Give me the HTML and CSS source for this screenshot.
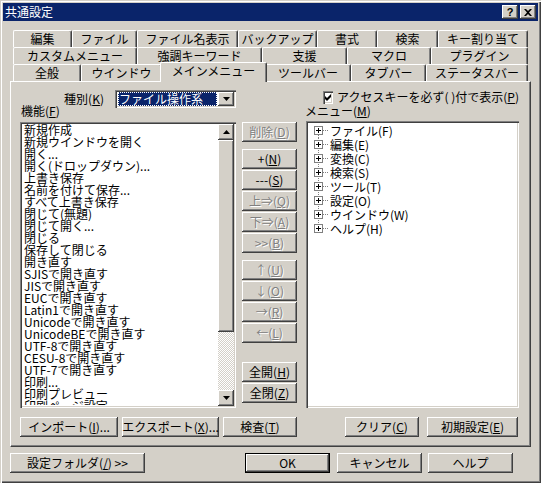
FILE: index.html
```html
<!DOCTYPE html>
<html lang="ja">
<head>
<meta charset="utf-8">
<title>共通設定</title>
<link rel="stylesheet" href="styles.css">
</head>
<body>
<div class="window">
  <div class="titlebar">
    <span class="title">共通設定</span>
    <div class="tb-buttons">
      <span class="tb-btn q">?</span>
      <span class="tb-btn"><svg width="8" height="7" viewBox="0 0 8 7"><path d="M0 0h2l2 2 2-2h2L5 3.5 8 7H6L4 5 2 7H0l3-3.5z" fill="#000"/></svg></span>
    </div>
  </div>
  <div class="client">
    <div class="tabs">
      <div class="tab-row">
        <div class="tab" style="width:59px">編集</div>
        <div class="tab" style="width:65px">ファイル</div>
        <div class="tab" style="width:101px">ファイル名表示</div>
        <div class="tab" style="width:79px">バックアップ</div>
        <div class="tab" style="width:60px">書式</div>
        <div class="tab" style="width:61px">検索</div>
        <div class="tab" style="width:90px">キー割り当て</div>
      </div>
      <div class="tab-row">
        <div class="tab" style="width:124px">カスタムメニュー</div>
        <div class="tab" style="width:125px">強調キーワード</div>
        <div class="tab" style="width:85px">支援</div>
        <div class="tab" style="width:84px">マクロ</div>
        <div class="tab" style="width:97px">プラグイン</div>
      </div>
      <div class="tab-row">
        <div class="tab" style="width:68px">全般</div>
        <div class="tab" style="width:81px">ウインドウ</div>
        <div class="tab sel" style="width:107px">メインメニュー</div>
        <div class="tab" style="width:86px">ツールバー</div>
        <div class="tab" style="width:75px">タブバー</div>
        <div class="tab" style="width:102px">ステータスバー</div>
      </div>
    </div>
    <div class="panel">
      <div class="panel-head">
        <div class="head-left">
          <div class="kind-row">
            <span class="lbl">種別(<u>K</u>)</span>
            <div class="combo">
              <div class="combo-val"><span>ファイル操作系</span></div>
              <div class="combo-btn"><svg width="7" height="4" viewBox="0 0 7 4"><polygon points="0,0 7,0 3.5,4" fill="#000"/></svg></div>
            </div>
          </div>
          <div class="lbl func-lbl">機能(<u>F</u>)</div>
        </div>
        <div class="head-right">
          <div class="check-row">
            <span class="checkbox"><svg width="9" height="9" viewBox="0 0 9 9"><polygon points="1,3 3,5 7,1 7,4 3,8 1,6" fill="#000"/></svg></span>
            <span class="lbl">アクセスキーを必ず( )付で表示(<u>P</u>)</span>
          </div>
          <div class="lbl menu-lbl">メニュー(<u>M</u>)</div>
        </div>
      </div>
      <div class="panel-body">
        <div class="listbox">
          <div class="list-items">
            <div>新規作成</div>
            <div>新規ウインドウを開く</div>
            <div>開く...</div>
            <div>開く(ドロップダウン)...</div>
            <div>上書き保存</div>
            <div>名前を付けて保存...</div>
            <div>すべて上書き保存</div>
            <div>閉じて(無題)</div>
            <div>閉じて開く...</div>
            <div>閉じる</div>
            <div>保存して閉じる</div>
            <div>開き直す</div>
            <div>SJISで開き直す</div>
            <div>JISで開き直す</div>
            <div>EUCで開き直す</div>
            <div>Latin1で開き直す</div>
            <div>Unicodeで開き直す</div>
            <div>UnicodeBEで開き直す</div>
            <div>UTF-8で開き直す</div>
            <div>CESU-8で開き直す</div>
            <div>UTF-7で開き直す</div>
            <div>印刷...</div>
            <div>印刷プレビュー</div>
            <div>印刷ページ設定</div>
          </div>
          <div class="vscroll">
            <div class="sb-btn"><svg width="7" height="4" viewBox="0 0 7 4"><polygon points="3.5,0 7,4 0,4" fill="#000"/></svg></div>
            <div class="sb-thumb"></div>
            <div class="sb-track"></div>
            <div class="sb-btn"><svg width="7" height="4" viewBox="0 0 7 4"><polygon points="0,0 7,0 3.5,4" fill="#000"/></svg></div>
          </div>
        </div>
        <div class="btn-col">
          <div class="btn dis">削除(<u>D</u>)</div>
          <div class="group g1">
            <div class="btn">+(<u>N</u>)</div>
            <div class="btn">---(<u>S</u>)</div>
            <div class="btn dis">上⇒(<u>Q</u>)</div>
            <div class="btn dis">下⇒(<u>A</u>)</div>
            <div class="btn dis">&gt;&gt;(<u>B</u>)</div>
          </div>
          <div class="group g2">
            <div class="btn dis">↑(<u>U</u>)</div>
            <div class="btn dis">↓(<u>O</u>)</div>
            <div class="btn dis">→(<u>R</u>)</div>
            <div class="btn dis">←(<u>L</u>)</div>
          </div>
          <div class="group g3">
            <div class="btn">全開(<u>H</u>)</div>
            <div class="btn">全閉(<u>Z</u>)</div>
          </div>
        </div>
        <div class="tree">
          <div class="node"><svg class="exp" width="16" height="14" viewBox="0 0 16 14"><line x1="4.5" y1="7" x2="4.5" y2="14" stroke="#808080" stroke-dasharray="1 1"/><rect x="0.5" y="2.5" width="8" height="8" fill="#fff" stroke="#808080"/><path d="M2 6.5h5M4.5 4v5" stroke="#000"/><line x1="9" y1="6.5" x2="14" y2="6.5" stroke="#808080" stroke-dasharray="1 1"/></svg><span>ファイル(F)</span></div>
          <div class="node"><svg class="exp" width="16" height="14" viewBox="0 0 16 14"><line x1="4.5" y1="0" x2="4.5" y2="14" stroke="#808080" stroke-dasharray="1 1"/><rect x="0.5" y="2.5" width="8" height="8" fill="#fff" stroke="#808080"/><path d="M2 6.5h5M4.5 4v5" stroke="#000"/><line x1="9" y1="6.5" x2="14" y2="6.5" stroke="#808080" stroke-dasharray="1 1"/></svg><span>編集(E)</span></div>
          <div class="node"><svg class="exp" width="16" height="14" viewBox="0 0 16 14"><line x1="4.5" y1="0" x2="4.5" y2="14" stroke="#808080" stroke-dasharray="1 1"/><rect x="0.5" y="2.5" width="8" height="8" fill="#fff" stroke="#808080"/><path d="M2 6.5h5M4.5 4v5" stroke="#000"/><line x1="9" y1="6.5" x2="14" y2="6.5" stroke="#808080" stroke-dasharray="1 1"/></svg><span>変換(C)</span></div>
          <div class="node"><svg class="exp" width="16" height="14" viewBox="0 0 16 14"><line x1="4.5" y1="0" x2="4.5" y2="14" stroke="#808080" stroke-dasharray="1 1"/><rect x="0.5" y="2.5" width="8" height="8" fill="#fff" stroke="#808080"/><path d="M2 6.5h5M4.5 4v5" stroke="#000"/><line x1="9" y1="6.5" x2="14" y2="6.5" stroke="#808080" stroke-dasharray="1 1"/></svg><span>検索(S)</span></div>
          <div class="node"><svg class="exp" width="16" height="14" viewBox="0 0 16 14"><line x1="4.5" y1="0" x2="4.5" y2="14" stroke="#808080" stroke-dasharray="1 1"/><rect x="0.5" y="2.5" width="8" height="8" fill="#fff" stroke="#808080"/><path d="M2 6.5h5M4.5 4v5" stroke="#000"/><line x1="9" y1="6.5" x2="14" y2="6.5" stroke="#808080" stroke-dasharray="1 1"/></svg><span>ツール(T)</span></div>
          <div class="node"><svg class="exp" width="16" height="14" viewBox="0 0 16 14"><line x1="4.5" y1="0" x2="4.5" y2="14" stroke="#808080" stroke-dasharray="1 1"/><rect x="0.5" y="2.5" width="8" height="8" fill="#fff" stroke="#808080"/><path d="M2 6.5h5M4.5 4v5" stroke="#000"/><line x1="9" y1="6.5" x2="14" y2="6.5" stroke="#808080" stroke-dasharray="1 1"/></svg><span>設定(O)</span></div>
          <div class="node"><svg class="exp" width="16" height="14" viewBox="0 0 16 14"><line x1="4.5" y1="0" x2="4.5" y2="14" stroke="#808080" stroke-dasharray="1 1"/><rect x="0.5" y="2.5" width="8" height="8" fill="#fff" stroke="#808080"/><path d="M2 6.5h5M4.5 4v5" stroke="#000"/><line x1="9" y1="6.5" x2="14" y2="6.5" stroke="#808080" stroke-dasharray="1 1"/></svg><span>ウインドウ(W)</span></div>
          <div class="node"><svg class="exp" width="16" height="14" viewBox="0 0 16 14"><line x1="4.5" y1="0" x2="4.5" y2="6" stroke="#808080" stroke-dasharray="1 1"/><rect x="0.5" y="2.5" width="8" height="8" fill="#fff" stroke="#808080"/><path d="M2 6.5h5M4.5 4v5" stroke="#000"/><line x1="9" y1="6.5" x2="14" y2="6.5" stroke="#808080" stroke-dasharray="1 1"/></svg><span>ヘルプ(H)</span></div>
        </div>
      </div>
      <div class="panel-foot">
        <div class="btn w-imp">インポート(<u>I</u>)...</div>
        <div class="btn w-exp">エクスポート(<u>X</u>)...</div>
        <div class="btn w-chk">検査(<u>T</u>)</div>
        <div class="btn w-clr">クリア(<u>C</u>)</div>
        <div class="btn w-init">初期設定(<u>E</u>)</div>
      </div>
    </div>
    <div class="dialog-foot">
      <div class="btn w-folder">設定フォルダ(<u>/</u>) &gt;&gt;</div>
      <div class="btn default w-ok">OK</div>
      <div class="btn w-cancel">キャンセル</div>
      <div class="btn w-help">ヘルプ</div>
    </div>
  </div>
</div>
</body>
</html>
```
FILE: styles.css
```css
* { box-sizing: border-box; }
html, body { margin: 0; padding: 0; }
body {
  width: 541px;
  height: 483px;
  overflow: hidden;
  background: #d4d0c8;
  font-family: "Noto Sans CJK JP", "Liberation Sans", sans-serif;
  font-size: 12px;
  color: #000;
}
u { text-decoration: underline; text-underline-offset: 1px; }

.window {
  width: 541px;
  height: 483px;
  padding: 3px;
  background: #d4d0c8;
  box-shadow: inset 1px 1px #d4d0c8, inset 2px 2px #fff, inset -1px -1px #404040, inset -2px -2px #808080;
  display: flex;
  flex-direction: column;
}

.titlebar {
  height: 18px;
  flex: 0 0 18px;
  background: #0a246a;
  color: #fff;
  display: flex;
  align-items: center;
  justify-content: space-between;
  padding: 0 2px 0 2px;
}
.title { font-size: 12px; line-height: 18px; }
.tb-buttons { display: flex; gap: 2px; }
.tb-btn {
  width: 16px;
  height: 14px;
  background: #d4d0c8;
  box-shadow: inset -1px -1px #404040, inset 1px 1px #fff, inset -2px -2px #808080;
  display: flex;
  align-items: center;
  justify-content: center;
  color: #000;
}
.tb-btn.q { font-family: "Liberation Sans", sans-serif; font-weight: bold; font-size: 11px; line-height: 14px; padding-bottom: 1px; }

.client {
  padding: 9px 7px 0 7px;
  display: flex;
  flex-direction: column;
}

.tabs {
  margin-left: 3px;
  width: 515px;
  height: 51px;
  display: flex;
  flex-direction: column;
}
.tab-row { display: flex; height: 17px; }
.tab {
  flex: 0 0 auto;
  height: 17px;
  background: #d4d0c8;
  border-top: 1px solid #fff;
  border-left: 1px solid #fff;
  border-right: 1px solid #404040;
  border-radius: 2px 2px 0 0;
  box-shadow: inset -1px 0 #808080;
  display: flex;
  align-items: center;
  justify-content: center;
  line-height: 14px;
  white-space: nowrap;
}
.tab.sel {
  margin: -2px -2px 0 -2px;
  height: 20px;
  padding-bottom: 3px;
  position: relative;
  z-index: 1;
}

.panel {
  width: 521px;
  height: 366px;
  border-top: 1px solid #fff;
  border-left: 1px solid #fff;
  border-right: 1px solid #404040;
  border-bottom: 1px solid #404040;
  box-shadow: inset -1px -1px #808080;
  padding: 8px 11px 9px 9px;
  display: flex;
  flex-direction: column;
}

.lbl { line-height: 14px; white-space: nowrap; }

.panel-head { display: flex; height: 32px; }
.head-left { width: 216px; display: flex; flex-direction: column; }
.head-right { width: 213px; margin-left: 70px; display: flex; flex-direction: column; }

.kind-row { height: 18px; display: flex; align-items: center; justify-content: flex-end; gap: 11px; }
.combo {
  width: 121px;
  height: 18px;
  background: #fff;
  padding: 2px;
  box-shadow: inset 1px 1px #808080, inset 2px 2px #404040, inset -1px -1px #fff, inset -2px -2px #d4d0c8;
  display: flex;
}
.combo-val { flex: 1; padding: 0 1px; display: flex; }
.combo-val span {
  flex: 1;
  background: #0a246a;
  color: #fff;
  outline: 1px dotted #fff;
  outline-offset: -1px;
  line-height: 14px;
  height: 14px;
  padding-left: 1px;
  white-space: nowrap;
}
.combo-btn {
  width: 16px;
  height: 14px;
  background: #d4d0c8;
  box-shadow: inset -1px -1px #404040, inset 1px 1px #fff, inset -2px -2px #808080;
  display: flex;
  align-items: center;
  justify-content: center;
}
.func-lbl { margin-top: -4px; margin-left: 1px; }

.check-row { height: 14px; display: flex; align-items: center; gap: 4px; padding-left: 17px; }
.checkbox {
  width: 13px;
  height: 13px;
  background: #fff;
  box-shadow: inset 1px 1px #808080, inset 2px 2px #404040, inset -1px -1px #fff, inset -2px -2px #d4d0c8;
  display: flex;
  align-items: center;
  justify-content: center;
}
.menu-lbl { margin-left: -1px; }

.panel-body { display: flex; height: 286px; }

.listbox {
  width: 216px;
  height: 286px;
  background: #fff;
  padding: 2px;
  overflow: hidden;
  box-shadow: inset 1px 1px #808080, inset 2px 2px #404040, inset -1px -1px #fff, inset -2px -2px #d4d0c8;
  display: flex;
}
.list-items { flex: 1; height: 282px; overflow: hidden; padding-left: 2px; padding-top: 1px; margin-top: -1px; }
.list-items div { line-height: 12px; height: 12px; white-space: nowrap; }

.vscroll { width: 16px; display: flex; flex-direction: column; }
.sb-btn, .sb-thumb {
  background: #d4d0c8;
  box-shadow: inset -1px -1px #404040, inset 1px 1px #fff, inset -2px -2px #808080;
}
.sb-btn { height: 16px; display: flex; align-items: center; justify-content: center; }
.sb-thumb { height: 192px; }
.sb-track {
  flex: 1;
  background-color: #fff;
  background-image: repeating-conic-gradient(#d4d0c8 0 25%, #fff 0 50%);
  background-size: 2px 2px;
}

.btn-col { width: 55px; margin-left: 6px; display: flex; flex-direction: column; }
.group { display: flex; flex-direction: column; gap: 1px; }
.g1 { margin-top: 7px; }
.g2 { margin-top: 7px; }
.g3 { margin-top: 19px; }

.btn {
  height: 20px;
  background: #d4d0c8;
  box-shadow: inset -1px -1px #404040, inset 1px 1px #fff, inset -2px -2px #808080;
  display: flex;
  align-items: center;
  justify-content: center;
  line-height: 14px;
  white-space: nowrap;
  flex: 0 0 auto;
}
.btn.dis { color: #808080; text-shadow: 1px 1px 0 #fff; }
.btn.default {
  border: 1px solid #000;
  box-shadow: inset -1px -1px #404040, inset 1px 1px #fff, inset -2px -2px #808080;
}

.tree {
  width: 213px;
  height: 287px;
  margin-left: 9px;
  margin-top: -1px;
  background: #fff;
  padding: 3px 2px 2px 8px;
  box-shadow: inset 1px 1px #808080, inset 2px 2px #404040, inset -1px -1px #fff, inset -2px -2px #d4d0c8;
}
.node { height: 14px; display: flex; align-items: center; white-space: nowrap; line-height: 14px; }
.exp { flex: 0 0 16px; display: block; }

.panel-foot { display: flex; margin-top: 9px; height: 20px; }
.w-imp { width: 98px; }
.w-exp { width: 97px; margin-left: 4px; }
.w-chk { width: 74px; margin-left: 4px; }
.w-clr { width: 74px; margin-left: 48px; }
.w-init { width: 91px; margin-left: 8px; }

.dialog-foot { display: flex; margin-top: 6px; height: 20px; }
.w-folder { width: 135px; }
.w-ok { width: 85px; margin-left: 100px; }
.w-cancel { width: 85px; margin-left: 7px; }
.w-help { width: 85px; margin-left: 6px; }
```
